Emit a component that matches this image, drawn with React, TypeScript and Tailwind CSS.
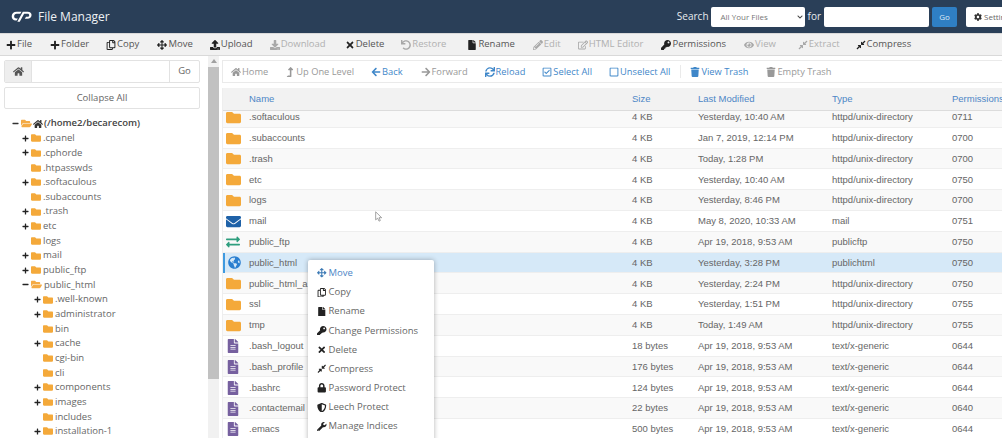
import type { ReactNode } from "react"
import {
  FaPlus, FaRegCopy, FaArrowsAlt, FaDownload, FaTimes, FaUndo, FaFile, FaPencilAlt, FaRegEdit,
  FaKey, FaEye, FaCompressAlt, FaHome, FaLevelUpAlt, FaArrowLeft, FaArrowRight, FaSync,
  FaRegCheckSquare, FaRegSquare, FaTrash, FaCog, FaFolder, FaFolderOpen, FaEnvelope, FaExchangeAlt,
  FaGlobeAmericas, FaFileAlt, FaLock, FaShieldAlt, FaWrench, FaUpload, FaChevronDown, FaMinus,
} from "react-icons/fa"

const actions: { icon: ReactNode; label: string; off?: boolean; gap: string }[] = [
  { icon: <FaPlus />, label: "File", gap: "mr-[18px]" },
  { icon: <FaPlus />, label: "Folder", gap: "mr-[17px]" },
  { icon: <FaRegCopy />, label: "Copy", gap: "mr-[18px]" },
  { icon: <FaArrowsAlt />, label: "Move", gap: "mr-[17px]" },
  { icon: <FaUpload />, label: "Upload", gap: "mr-[17px]" },
  { icon: <FaDownload />, label: "Download", off: true, gap: "mr-[19px]" },
  { icon: <FaTimes />, label: "Delete", gap: "mr-[17px]" },
  { icon: <FaUndo />, label: "Restore", off: true, gap: "mr-[21px]" },
  { icon: <FaFile />, label: "Rename", gap: "mr-[18px]" },
  { icon: <FaPencilAlt />, label: "Edit", off: true, gap: "mr-[17px]" },
  { icon: <FaRegEdit />, label: "HTML Editor", off: true, gap: "mr-[18px]" },
  { icon: <FaKey />, label: "Permissions", gap: "mr-[18px]" },
  { icon: <FaEye />, label: "View", off: true, gap: "mr-[22px]" },
  { icon: <FaCompressAlt />, label: "Extract", off: true, gap: "mr-[16px]" },
  { icon: <FaCompressAlt />, label: "Compress", gap: "" },
]

const nav: { icon: ReactNode; label: string; tone: string; gap: string }[] = [
  { icon: <FaHome />, label: "Home", tone: "text-[#999]", gap: "mr-[17px]" },
  { icon: <FaLevelUpAlt />, label: "Up One Level", tone: "text-[#999]", gap: "mr-[17px]" },
  { icon: <FaArrowLeft />, label: "Back", tone: "text-[#3f87c9]", gap: "mr-[18px]" },
  { icon: <FaArrowRight />, label: "Forward", tone: "text-[#999]", gap: "mr-[17px]" },
  { icon: <FaSync />, label: "Reload", tone: "text-[#3f87c9]", gap: "mr-[17px]" },
  { icon: <FaRegCheckSquare />, label: "Select All", tone: "text-[#3f87c9]", gap: "mr-[17px]" },
  { icon: <FaRegSquare />, label: "Unselect All", tone: "text-[#3f87c9]", gap: "mr-[19px]" },
  { icon: <FaTrash />, label: "View Trash", tone: "text-[#3f87c9]", gap: "mr-[18px]" },
  { icon: <FaTrash />, label: "Empty Trash", tone: "text-[#999]", gap: "" },
]

const tree: { name: string; depth: number; sign?: "+" | "-"; open?: boolean }[] = [
  { name: ".cpanel", depth: 1, sign: "+" },
  { name: ".cphorde", depth: 1, sign: "+" },
  { name: ".htpasswds", depth: 1 },
  { name: ".softaculous", depth: 1, sign: "+" },
  { name: ".subaccounts", depth: 1 },
  { name: ".trash", depth: 1, sign: "+" },
  { name: "etc", depth: 1, sign: "+" },
  { name: "logs", depth: 1 },
  { name: "mail", depth: 1, sign: "+" },
  { name: "public_ftp", depth: 1, sign: "+" },
  { name: "public_html", depth: 1, sign: "-", open: true },
  { name: ".well-known", depth: 2, sign: "+" },
  { name: "administrator", depth: 2, sign: "+" },
  { name: "bin", depth: 2 },
  { name: "cache", depth: 2, sign: "+" },
  { name: "cgi-bin", depth: 2 },
  { name: "cli", depth: 2 },
  { name: "components", depth: 2, sign: "+" },
  { name: "images", depth: 2, sign: "+" },
  { name: "includes", depth: 2 },
  { name: "installation-1", depth: 2, sign: "+" },
]

type Kind = "dir" | "mail" | "ftp" | "web" | "file"
const rows: { kind: Kind; name: string; size: string; date: string; type: string; perm: string }[] = [
  { kind: "dir", name: ".softaculous", size: "4 KB", date: "Yesterday, 10:40 AM", type: "httpd/unix-directory", perm: "0711" },
  { kind: "dir", name: ".subaccounts", size: "4 KB", date: "Jan 7, 2019, 12:14 PM", type: "httpd/unix-directory", perm: "0700" },
  { kind: "dir", name: ".trash", size: "4 KB", date: "Today, 1:28 PM", type: "httpd/unix-directory", perm: "0700" },
  { kind: "dir", name: "etc", size: "4 KB", date: "Yesterday, 10:40 AM", type: "httpd/unix-directory", perm: "0750" },
  { kind: "dir", name: "logs", size: "4 KB", date: "Yesterday, 8:46 PM", type: "httpd/unix-directory", perm: "0700" },
  { kind: "mail", name: "mail", size: "4 KB", date: "May 8, 2020, 10:33 AM", type: "mail", perm: "0751" },
  { kind: "ftp", name: "public_ftp", size: "4 KB", date: "Apr 19, 2018, 9:53 AM", type: "publicftp", perm: "0750" },
  { kind: "web", name: "public_html", size: "4 KB", date: "Yesterday, 3:28 PM", type: "publichtml", perm: "0750" },
  { kind: "dir", name: "public_html_a", size: "4 KB", date: "Yesterday, 2:24 PM", type: "httpd/unix-directory", perm: "0750" },
  { kind: "dir", name: "ssl", size: "4 KB", date: "Yesterday, 1:51 PM", type: "httpd/unix-directory", perm: "0755" },
  { kind: "dir", name: "tmp", size: "4 KB", date: "Today, 1:49 AM", type: "httpd/unix-directory", perm: "0755" },
  { kind: "file", name: ".bash_logout", size: "18 bytes", date: "Apr 19, 2018, 9:53 AM", type: "text/x-generic", perm: "0644" },
  { kind: "file", name: ".bash_profile", size: "176 bytes", date: "Apr 19, 2018, 9:53 AM", type: "text/x-generic", perm: "0644" },
  { kind: "file", name: ".bashrc", size: "124 bytes", date: "Apr 19, 2018, 9:53 AM", type: "text/x-generic", perm: "0644" },
  { kind: "file", name: ".contactemail", size: "22 bytes", date: "Apr 19, 2018, 9:53 AM", type: "text/x-generic", perm: "0640" },
  { kind: "file", name: ".emacs", size: "500 bytes", date: "Apr 19, 2018, 9:53 AM", type: "text/x-generic", perm: "0644" },
]

const menu: { icon: ReactNode; label: string; blue?: boolean }[] = [
  { icon: <FaArrowsAlt />, label: "Move", blue: true },
  { icon: <FaRegCopy />, label: "Copy" },
  { icon: <FaFile />, label: "Rename" },
  { icon: <FaKey />, label: "Change Permissions" },
  { icon: <FaTimes />, label: "Delete" },
  { icon: <FaCompressAlt />, label: "Compress" },
  { icon: <FaLock />, label: "Password Protect" },
  { icon: <FaShieldAlt />, label: "Leech Protect" },
  { icon: <FaWrench />, label: "Manage Indices" },
]

function RowIcon({ kind }: { kind: Kind }) {
  if (kind === "mail") return <FaEnvelope className="text-[15px] text-[#1f62a8]" />
  if (kind === "ftp") return <FaExchangeAlt className="text-[14px] text-[#2e9e7e]" />
  if (kind === "web") return <FaGlobeAmericas className="text-[13px] text-[#2a7fd0]" />
  if (kind === "file") return <FaFileAlt className="text-[14px] text-[#76609f]" />
  return <FaFolder className="text-[15px] text-[#f4a93a]" />
}

export default function App() {
  return (
    <div className="relative flex h-[438px] w-[1002px] flex-col overflow-hidden bg-white font-['Open_Sans',sans-serif] text-[#555]">
      {/* Top bar */}
      <header className="flex h-[33px] shrink-0 items-center bg-[#2a3f58] pl-[11px]">
        <svg viewBox="0 0 24 14" className="h-[13px] w-[21px]" fill="#fff">
          <path d="M6.5 1.5H12L10.6 3.8H6.4C4.7 3.8 3.6 4.8 3.6 6.6 3.6 8.2 4.6 9.2 6.2 9.2H7.8L6.4 11.6H5.6C2.4 11.6.8 9.6.8 6.7.8 3.6 3 1.5 6.5 1.5Z" />
          <path d="M13.5 1.5H19C22 1.5 23.5 3 23.5 5.3 23.5 8 21.6 9.6 18.6 9.6H15.8L17.2 7.3H18.6C19.9 7.3 20.8 6.6 20.8 5.5 20.8 4.5 20.2 3.8 18.9 3.8H15L10 13H7.2L13.5 1.5Z" />
        </svg>
        <span className="ml-[6px] text-[12px] text-[#eef1f4]">File Manager</span>
        <div className="ml-auto flex items-center">
          <span className="text-[10px] text-[#e8ebef]">Search</span>
          <div className="ml-[2px] flex h-[20px] w-[94px] items-center justify-between rounded-[2px] bg-white pl-[10px] pr-[2px] text-[8px] text-[#777]">
            All Your Files
            <FaChevronDown className="text-[6px] text-[#444]" />
          </div>
          <span className="ml-[3px] text-[10px] text-[#e8ebef]">for</span>
          <div className="ml-[3px] h-[20px] w-[105px] rounded-[2px] bg-white" />
          <div className="ml-[3px] flex h-[20px] w-[25px] items-center justify-center rounded-[2px] bg-[#2f7fc4] text-[8px] text-[#dce9f5]">Go</div>
          <div className="ml-[9px] flex h-[20px] w-[36px] items-center overflow-hidden rounded-l-[2px] bg-white pl-[8px] text-[8px] text-[#666]">
            <FaCog className="mr-[2px] shrink-0 text-[8px] text-[#333]" />
            <span>Settings</span>
          </div>
        </div>
      </header>

      {/* Actions */}
      <div className="flex h-[23px] shrink-0 items-center border-y border-[#d9d9d9] bg-[#f1f1f1] pl-[6px] text-[9.5px]">
        {actions.map((a) => (
          <div key={a.label} className={`flex items-center gap-[1px] whitespace-nowrap ${a.gap} ${a.off ? "text-[#b0b0b0]" : "text-[#555]"}`}>
            <span className={`text-[10px] ${a.off ? "text-[#a8a8a8]" : "text-[#222]"}`}>{a.icon}</span>
            {a.label}
          </div>
        ))}
      </div>

      <div className="flex min-h-0 flex-1">
        {/* Directory tree */}
        <aside className="w-[208px] shrink-0 overflow-hidden pl-[4px] pt-[4px]">
          <div className="flex h-[23px] w-[196px] overflow-hidden rounded-[2px] border border-[#e2e2e2] text-[9.5px]">
            <div className="flex w-[27px] items-center justify-center border-r border-[#e2e2e2] bg-[#eeeeee] text-[11px] text-[#555]"><FaHome /></div>
            <div className="flex-1" />
            <div className="flex w-[30px] items-center justify-center border-l border-[#e2e2e2] text-[#666]">Go</div>
          </div>
          <div className="mt-[4px] flex h-[22px] w-[196px] items-center justify-center rounded-[2px] border border-[#e2e2e2] text-[9.5px] text-[#666]">Collapse All</div>
          <div className="mt-[7px] flex h-[15px] items-center pl-[7px] text-[9.5px] font-semibold text-[#444]">
            <FaMinus className="w-[9px] text-[7px] text-[#333]" />
            <FaFolderOpen className="ml-[1px] text-[11px] text-[#f4ab45]" />
            <FaHome className="ml-[1px] text-[10px] text-[#333]" />
            <span className="ml-[1px]">(/home2/becarecom)</span>
          </div>
          {tree.map((t) => (
            <div key={t.name} className={`flex h-[14.67px] items-center text-[9.5px] text-[#666] ${t.depth === 1 ? "pl-[18px]" : "pl-[30px]"}`}>
              <span className="flex w-[9px] shrink-0 items-center text-[7px] text-[#222]">
                {t.sign === "+" && <FaPlus />}
                {t.sign === "-" && <FaMinus />}
              </span>
              {t.open
                ? <FaFolderOpen className="text-[11px] text-[#f4ab45]" />
                : <FaFolder className="text-[10px] text-[#f4a93a]" />}
              <span className="ml-[2px] whitespace-nowrap">{t.name}</span>
            </div>
          ))}
        </aside>

        {/* Scrollbar */}
        <div className="flex w-[11px] shrink-0 flex-col items-center bg-[#f1f1f1] pt-[3px]">
          <div className="h-0 w-0 border-x-[3px] border-b-[4px] border-x-transparent border-b-[#a0a0a0]" />
          <div className="mt-[4px] h-[312px] w-full bg-[#c1c1c1]" />
        </div>

        {/* Listing */}
        <main className="ml-[3px] flex min-w-0 flex-1 flex-col overflow-hidden pt-[4px]">
          <div className="flex h-[23px] shrink-0 items-center border border-r-0 border-[#eaeaea] pl-[8px] text-[9.3px]">
            {nav.map((n) => (
              <div key={n.label} className={`flex items-center gap-[1px] whitespace-nowrap ${n.gap} ${n.tone} ${n.label === "View Trash" ? "border-l border-[#eaeaea] pl-[9px] ml-[-9px]" : ""}`}>
                <span className="text-[10px]">{n.icon}</span>
                {n.label}
              </div>
            ))}
          </div>
          <div className="relative mt-[5px] min-h-0 flex-1 overflow-hidden border-l border-[#eeeeee] font-['Liberation_Sans',sans-serif]">
            <div className="relative z-10 grid h-[23px] grid-cols-[409px_66px_134px_120px_1fr] items-center whitespace-nowrap border-b border-[#dcdcdc] bg-[#f2f2f2] text-[9.5px] text-[#4d86c6]">
              <span className="pl-[26px]">Name</span>
              <span>Size</span>
              <span>Last Modified</span>
              <span>Type</span>
              <span>Permissions</span>
            </div>
            <div className="-mt-[4px]">
              {rows.map((r, i) => (
                <div
                  key={r.name}
                  className={`grid h-[20.8px] grid-cols-[409px_66px_134px_120px_1fr] items-center whitespace-nowrap border-b border-[#eeeeee] text-[9.5px] text-[#666] ${
                    r.kind === "web" ? "bg-[#d6e9f8]" : i % 2 === 0 ? "bg-[#f9f9f9]" : "bg-white"
                  }`}
                >
                  <span className="flex items-center">
                    <span className={`mr-[6px] flex h-[20.8px] w-[20px] items-center justify-center ${r.kind === "web" ? "border-l-2 border-[#3f9ae0]" : ""}`}>
                      <RowIcon kind={r.kind} />
                    </span>
                    <span>{r.name}</span>
                  </span>
                  <span>{r.size}</span>
                  <span>{r.date}</span>
                  <span>{r.type}</span>
                  <span>{r.perm}</span>
                </div>
              ))}
            </div>
          </div>
        </main>
      </div>

      {/* Mouse pointer */}
      <svg viewBox="0 0 12 16" className="absolute left-[375px] top-[211px] h-[11px] w-[8px]" fill="#fff" stroke="#777">
        <path d="M1 1V13L4 10.5 6 15 8 14 6 9.8H10Z" />
      </svg>

      {/* Context menu */}
      <div className="absolute left-[308px] top-[260px] h-[190px] w-[126px] rounded-[2px] bg-white pt-[3.5px] text-[9.5px] text-[#666] shadow-[0_0_5px_rgba(0,0,0,0.3)]">
        {menu.map((m) => (
          <div key={m.label} className={`flex h-[19.2px] items-center gap-[2px] whitespace-nowrap pl-[9px] ${m.blue ? "text-[#4d86c6]" : ""}`}>
            <span className={`text-[9.5px] ${m.blue ? "text-[#3d7ab5]" : "text-[#222]"}`}>{m.icon}</span>
            {m.label}
          </div>
        ))}
      </div>
    </div>
  )
}
